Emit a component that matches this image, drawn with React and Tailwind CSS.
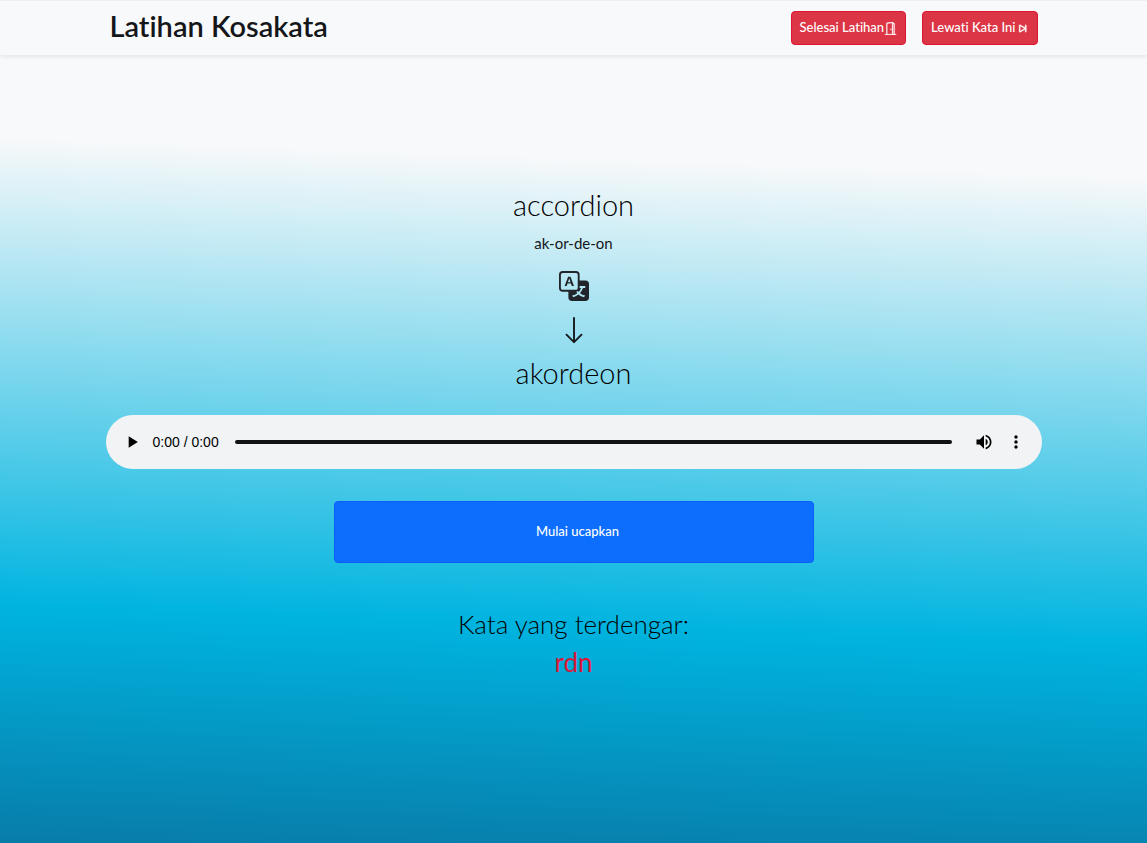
import { BsArrowDown, BsDoorOpen, BsSkipEnd, BsTranslate } from "react-icons/bs";
import { MdMoreVert, MdPlayArrow, MdVolumeUp } from "react-icons/md";

function HeaderButton({ children }) {
  return (
    <button
      type="button"
      className="flex h-[34px] items-center rounded border border-[#dc1535] bg-[#dc3545] px-2 text-[13px] font-medium text-white"
    >
      {children}
    </button>
  );
}

function Header() {
  return (
    <header className="border-t border-[#eff0f2] bg-[#f8f9fa] shadow-[0_2px_4px_rgba(0,0,0,0.075)]">
      <div className="mx-auto flex h-[54px] w-full max-w-[960px] items-center justify-between px-4">
        <h1 className="pb-1 text-[29px] leading-9 font-semibold text-[#141619]">Latihan Kosakata</h1>
        <nav aria-label="Latihan" className="flex gap-4">
          <HeaderButton>
            Selesai Latihan
            <BsDoorOpen className="size-[13px] stroke-white [stroke-width:0.4]" aria-hidden="true" />
          </HeaderButton>
          <HeaderButton>
            Lewati Kata Ini
            <BsSkipEnd className="size-[13px] stroke-white [stroke-width:0.8]" aria-hidden="true" />
          </HeaderButton>
        </nav>
      </div>
    </header>
  );
}

function AudioPlayer() {
  return (
    <section
      aria-label="Pemutar audio"
      className="flex h-[54px] w-full items-center rounded-full bg-[#f1f3f4] pr-[10px] pl-4 text-black"
    >
      <button type="button" aria-label="Putar" className="flex size-5 items-center justify-center">
        <MdPlayArrow className="size-5" />
      </button>
      <span className="ml-[11px] font-['Liberation_Sans',sans-serif] text-[14px] leading-5 whitespace-nowrap">0:00 / 0:00</span>
      <input
        type="range"
        aria-label="Posisi audio"
        min="0"
        max="100"
        defaultValue="0"
        className="mx-4 h-1 min-w-0 flex-1 appearance-none rounded-full bg-[#101214] [&::-webkit-slider-thumb]:size-0 [&::-webkit-slider-thumb]:appearance-none"
      />
      <button type="button" aria-label="Volume" className="flex size-8 items-center justify-center">
        <MdVolumeUp className="size-5" />
      </button>
      <button type="button" aria-label="Opsi lainnya" className="flex size-8 items-center justify-center">
        <MdMoreVert className="size-5" />
      </button>
    </section>
  );
}

export default function App() {
  return (
    <div className="flex min-h-screen flex-col bg-[linear-gradient(2deg,#087ca9_0%,#00b4e0_27%,#f8f9fa_80%)] font-['Lato','Open_Sans',sans-serif] text-[#212529] [font-variant-ligatures:none]">
      <Header />
      <main className="mx-auto flex w-full max-w-[960px] flex-col items-center px-3 pt-[132px] pb-8 text-center text-[#141619]">
        <h2 className="text-[29px] leading-9 font-light text-black">accordion</h2>
        <p className="mt-[10px] text-[15px] leading-5">ak-or-de-on</p>
        <BsTranslate className="mt-[18px] size-[30px] text-[#212529]" aria-hidden="true" />
        <BsArrowDown className="mt-[14px] size-[30px]" aria-hidden="true" />
        <h2 className="mt-[10px] mb-6 text-[29px] leading-9 font-light text-black">akordeon</h2>
        <AudioPlayer />
        <button
          type="button"
          className="mt-8 h-[62px] w-full max-w-[480px] rounded border border-[#0d5dfd] bg-[#0d6efd] pl-2 text-[13px] font-medium text-white"
        >
          Mulai ucapkan
        </button>
        <h3 className="mt-[42px] text-[26px] leading-[38px] font-light text-black">Kata yang terdengar:</h3>
        <p className="text-[26px] leading-[38px] text-[#dc1535]">rdn</p>
      </main>
    </div>
  );
}
